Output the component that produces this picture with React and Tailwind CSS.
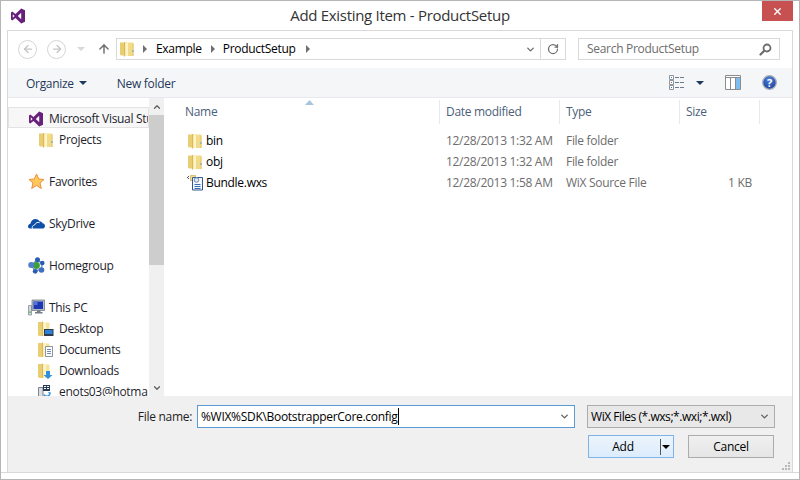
import { ChevronDown, ChevronUp, RotateCw, ArrowUp, ArrowLeft, ArrowRight, X } from "lucide-react";

function VsLogo() {
  return (
    <svg width="16" height="16" viewBox="0 0 16 16" className="shrink-0">
      <path fill="#68217a" fillRule="evenodd" d="M11.200 0.500 15 2.200v11.600l-3.800 1.700-5.700-5.600-3.300 2.500L1 11.500v-7l1.200-.9 3.300 2.500zM11.200 4.800 7.800 8l3.400 3.200zM2.800 6.200v3.600L4.600 8z" />
    </svg>
  );
}

function Folder({ id = "f" }) {
  return (
    <svg width="16" height="16" viewBox="0 0 16 16" className="shrink-0">
      <defs>
        <linearGradient id={id} x1="0" y1="0" x2="0" y2="1">
          <stop offset="0" stopColor="#f4dc88" />
          <stop offset="1" stopColor="#f0d98c" />
        </linearGradient>
      </defs>
      <path fill="#e9cd72" d="M1 1.500h4v13H2l-1-1z" />
      <path fill="#d9b95a" d="M5 1h1v14.500H5z" />
      <path fill={`url(#${id})`} d="M6 1.500h7.500a1 1 0 0 1 1 1V15H6z" />
      <path fill="#fdf4c8" d="M6.500 2h2.500v13H6.500z" />
      <path fill="#e6c566" d="M13.500 2.500h1V15h-1z" />
      <path fill="#4fa6e0" d="M13.500 9h1v2h-1z" />
    </svg>
  );
}

function FolderBack({ children }) {
  return (
    <svg width="16" height="16" viewBox="0 0 16 16" className="shrink-0">
      <path fill="#e9cd72" d="M0 1h4v14H1l-1-1z" />
      <path fill="#d9b95a" d="M4 .5h1V15H4z" />
      <path fill="#f6e3a0" d="M5 1.500h5.500a1 1 0 0 1 1 1V15H5z" />
      <path fill="#fdf4c8" d="M5.500 2H8v13H5.500z" />
      {children}
    </svg>
  );
}

function Star() {
  return (
    <svg width="17" height="17" viewBox="0 0 17 17" className="shrink-0">
      <defs>
        <linearGradient id="star" x1="0" y1="0" x2="0" y2="1">
          <stop offset="0" stopColor="#ffd24a" />
          <stop offset="1" stopColor="#fcc06a" />
        </linearGradient>
      </defs>
      <path fill="url(#star)" stroke="#ec8f3c" d="M8.500 1l2.200 5 5.300.5-4 3.500 1.300 5.500-4.800-3-4.800 3 1.300-5.500-4-3.500 5.300-.5z" />
    </svg>
  );
}

function Cloud() {
  return (
    <svg width="17" height="16" viewBox="0 0 17 16" className="shrink-0">
      <path fill="#0f4fa8" d="M0 10.500c0-1.500 1-2.600 2.400-2.800C3 5 5.100 3 7.500 3c1.900 0 3.400 1 4.100 2.500 1.300-.2 2.500.5 2.900 1.700 1.400.1 2.500 1.300 2.500 2.700 0 1.500-1.100 2.600-2.600 2.600H2c-1.200 0-2-.8-2-2z" />
      <path fill="none" stroke="#fff" strokeWidth="0.9" d="M4.500 12.800c-.9-1.800.4-3.800 2.300-3.900.4-1.400 1.700-2.500 3.300-2.500.6 0 1 .1 1.500.3" />
    </svg>
  );
}

function Homegroup() {
  return (
    <svg width="17" height="17" viewBox="0 0 17 17" className="shrink-0">
      <path stroke="#7f9bc8" strokeWidth="1.500" d="M9 3L3.500 8M9 3l5 3M3.500 8l3.500 6M14 6l-.5 6M7 14l6.500-2" />
      <circle cx="8.500" cy="8.500" r="3.400" fill="#3c9e3a" />
      <circle cx="9.500" cy="2.800" r="2.500" fill="#2b5cb4" />
      <circle cx="3.200" cy="8" r="3" fill="#4f7fca" />
      <circle cx="14.300" cy="6" r="2.300" fill="#2b5cb4" />
      <circle cx="7.200" cy="14.300" r="2.400" fill="#2b5cb4" />
      <circle cx="13.500" cy="13" r="2.800" fill="#3f6fbe" />
    </svg>
  );
}

function ThisPc() {
  return (
    <svg width="17" height="17" viewBox="0 0 17 17" className="shrink-0">
      <path fill="#d3d7da" stroke="#7a838c" strokeWidth="0.7" d="M.5 6.500h3v9.500h-3z" />
      <path fill="#4cc248" d="M1 12.500h2v1.200H1z" />
      <path fill="#b4bbc2" stroke="#69727b" strokeWidth="0.7" d="M4 1h12.500v10.500H4z" />
      <path fill="#1c37b4" d="M5.500 2.500h9.500V10H5.500z" />
      <path fill="#5574d8" d="M5.500 2.500h4V6h-4z" />
      <path fill="#747d86" d="M9 11.500h3.500v1.500h2v1.500h-7.500V13h2z" />
    </svg>
  );
}

function MailDrive() {
  return (
    <svg width="16" height="16" viewBox="0 0 16 16" className="shrink-0">
      <path fill="#d8dcdf" stroke="#7c858d" d="M.5 3.500h4.500v12.500H.5z" />
      <path fill="#263b58" d="M5 1h7v6H5z" />
      <path fill="#fff" d="M6 2h2v1H6zM9 2h2v1H9zM6 4h2v1H6zM9 4h2v1H9z" />
      <path fill="none" stroke="#2f8fdc" strokeWidth="1.500" d="M6 10.500a3 3 0 0 0 5.500 0" />
      <path fill="#2f8fdc" d="M10 8l3 .5-1 3z" />
    </svg>
  );
}

function BundleFile() {
  return (
    <svg width="17" height="16" viewBox="0 0 17 16" className="shrink-0">
      <path fill="#f2dc8e" stroke="#c7ab58" strokeWidth="0.7" d="M3.500 .5h5v5h-5z" />
      <path fill="#f4f8fc" stroke="#35588c" d="M5.500 2.500h10v12.500h-10z" />
      <path fill="none" stroke="#3a6cb4" d="M7.500 9.500h6M7.500 11.500h6M7.500 13.500h6" />
      <circle cx="9.500" cy="5" r="2.300" fill="#dbe7f5" stroke="#748aa5" />
      <path fill="#4c5666" d="M0 2h1v1H0zM1 1h1v1H1zM1 3h1v1H1z" />
    </svg>
  );
}

function SideRow({ level = 1, icon, children, selected }) {
  return (
    <div
      className={`flex h-[21px] shrink-0 items-center overflow-hidden whitespace-nowrap border pt-[2px] ${level === 2 ? "pl-[29px]" : "pl-[19px]"} ${selected ? "border-[#e3e3e3] bg-[#f7f7f7]" : "border-transparent"}`}
    >
      <span className="flex w-[21px] shrink-0">{icon}</span>
      <span>{children}</span>
    </div>
  );
}

function SideGap() {
  return <div className="h-[21px] shrink-0" />;
}

function Crumb() {
  return (
    <svg width="4" height="8" viewBox="0 0 4 8" className="shrink-0">
      <path fill="#6f6f6f" d="M0 0l4 4-4 4z" />
    </svg>
  );
}

function Header({ label, width }) {
  return (
    <div style={{ width }} className="flex h-[24px] shrink-0 items-center border-r border-[#e7e9ec] pl-[6px] text-[#4c607a]">
      {label}
    </div>
  );
}

function FileRow({ icon, name, date, type, size }) {
  return (
    <div className="flex h-[21px] items-center">
      <div className="flex w-[273px] shrink-0 items-center pl-[20px] text-black">
        <span className="flex w-[19px] shrink-0">{icon}</span>
        {name}
      </div>
      <div className="w-[120px] shrink-0 pl-[6px] text-[#6d6d6d]">{date}</div>
      <div className="w-[120px] shrink-0 pl-[6px] text-[#6d6d6d]">{type}</div>
      <div className="w-[72px] shrink-0 text-right text-[#6d6d6d]">{size}</div>
    </div>
  );
}

export default function App() {
  return (
    <div className="relative flex h-[480px] w-[800px] flex-col overflow-hidden border border-[#b5b5b5] bg-white font-['Open_Sans','Noto_Sans',sans-serif] text-[12px] tracking-[-0.3px] text-[#1e1e1e]">
      {/* title bar */}
      <div className="grid h-[29px] shrink-0 grid-cols-[1fr_auto_1fr] items-start">
        <div className="pl-[9px] pt-[7px]">
          <VsLogo />
        </div>
        <div className="pt-[3px] text-[15px] leading-[22px] text-[#333]">Add Existing Item - ProductSetup</div>
        <div className="flex justify-end pr-[6px]">
          <div className="flex h-[20px] w-[31px] items-center justify-center bg-[#c75050] text-white">
            <X size={11} strokeWidth={3} />
          </div>
        </div>
      </div>

      <div className="mx-[6px] flex min-h-0 flex-1 flex-col border-x border-t border-[#d9d9d9] bg-white">
        {/* nav bar */}
        <div className="flex h-[37px] shrink-0 items-center pb-px pl-[10px]">
          <div className="flex h-[19px] w-[19px] items-center justify-center rounded-full border border-[#d5d5d5] text-[#c4c4c4]">
            <ArrowLeft size={12} strokeWidth={2.500} />
          </div>
          <div className="ml-[10px] flex h-[19px] w-[19px] items-center justify-center rounded-full border border-[#d5d5d5] text-[#c4c4c4]">
            <ArrowRight size={12} strokeWidth={2.500} />
          </div>
          <div className="ml-[11px] h-0 w-0 border-x-[4px] border-t-[4px] border-x-transparent border-t-[#d8d8d8]" />
          <ArrowUp size={14} strokeWidth={2.500} className="ml-[12px] text-[#6d6d6d]" />
          <div className="ml-[5px] flex h-[22px] w-[450px] shrink-0 items-center border border-[#d9d9d9]">
            <span className="pl-[2px]"><Folder id="addr" /></span>
            <span className="ml-[8px]"><Crumb /></span>
            <span className="ml-[9px] text-black">Example</span>
            <span className="ml-[9px]"><Crumb /></span>
            <span className="ml-[8px] text-black">ProductSetup</span>
            <span className="ml-[10px]"><Crumb /></span>
            <span className="flex-1" />
            <ChevronDown size={11} strokeWidth={3} className="mr-[4px] text-[#6d6d6d]" />
            <div className="flex h-full w-[25px] items-center justify-center border-l border-[#d9d9d9]">
              <RotateCw size={12} strokeWidth={2.500} className="text-[#6d6d6d]" />
            </div>
          </div>
          <div className="ml-[12px] flex h-[22px] w-[202px] shrink-0 items-center justify-between border border-[#d9d9d9] pl-[8px] pr-[7px] text-[#6d6d6d]">
            Search ProductSetup
            <svg width="13" height="13" viewBox="0 0 13 13">
              <circle cx="8" cy="5" r="3.500" fill="none" stroke="#6d6d6d" strokeWidth="1.800" />
              <path stroke="#6d6d6d" strokeWidth="2.200" strokeLinecap="round" d="M5.300 7.700L1.500 11.500" />
            </svg>
          </div>
        </div>

        {/* toolbar */}
        <div className="flex h-[30px] shrink-0 items-center border-b border-[#e6e8eb] bg-[#f5f6f7] pl-[18px] pr-[15px] text-[#1e395b]">
          <span className="pt-[2px]">Organize</span>
          <span className="ml-[5px] h-0 w-0 border-x-[4px] border-t-[4px] border-x-transparent border-t-[#1e395b]" />
          <span className="ml-[30px] pt-[2px]">New folder</span>
          <span className="flex-1" />
          <svg width="16" height="15" viewBox="0 0 16 15">
            <path fill="#fff" stroke="#8a93a0" d="M.5 .5h4v4h-4zM.5 5.500h4v4h-4zM.5 10.500h4v4h-4z" />
            <path fill="#3f73b8" d="M2 2h1v1H2zM2 12h1v1H2z" />
            <path fill="#d04a3a" d="M2 7h1v1H2z" />
            <path stroke="#6e7c92" d="M6 2.500h10M6 7.500h10M6 12.500h10" strokeDasharray="4 1" />
          </svg>
          <span className="ml-[11px] h-0 w-0 border-x-[4px] border-t-[4px] border-x-transparent border-t-[#1e395b]" />
          <svg width="16" height="15" viewBox="0 0 16 15" className="ml-[21px]">
            <path fill="#fff" stroke="#8c8c8c" d="M.5 .5h15v14H.5z" />
            <path fill="#7fbcf2" d="M10 3h5v11h-5z" />
            <path stroke="#8c8c8c" d="M.5 2.500h15M5.500 2.500v12M10.500 2.500v12" />
          </svg>
          <svg width="15" height="15" viewBox="0 0 15 15" className="ml-[21px]">
            <defs>
              <radialGradient id="help" cx="0.5" cy="0.3" r="0.7">
                <stop offset="0" stopColor="#4f86dc" />
                <stop offset="1" stopColor="#1c3f9c" />
              </radialGradient>
            </defs>
            <circle cx="7.500" cy="7.500" r="6.800" fill="url(#help)" stroke="#a7adb8" strokeWidth="1.300" />
            <text x="7.500" y="11.500" textAnchor="middle" fontSize="11" fontWeight="700" fill="#fff">?</text>
          </svg>
        </div>

        {/* main */}
        <div className="flex h-[298px] shrink-0">
          <div className="flex w-[141px] shrink-0 flex-col overflow-hidden pt-[9px] text-[#1e1e2e]">
            <SideRow selected icon={<VsLogo />}>Microsoft Visual Studio</SideRow>
            <SideRow level={2} icon={<Folder id="proj" />}>Projects</SideRow>
            <SideGap />
            <SideRow icon={<Star />}>Favorites</SideRow>
            <SideGap />
            <SideRow icon={<Cloud />}>SkyDrive</SideRow>
            <SideGap />
            <SideRow icon={<Homegroup />}>Homegroup</SideRow>
            <SideGap />
            <SideRow icon={<ThisPc />}>This PC</SideRow>
            <SideRow level={2} icon={<FolderBack><path fill="#2d3b4f" d="M6 8h9.500v7H6z" /><path fill="#2f7fd4" d="M7 9h7.500v4H7z" /></FolderBack>}>Desktop</SideRow>
            <SideRow level={2} icon={<FolderBack><path fill="#fff" stroke="#8a93a0" d="M7.500 4.500h7v10h-7z" /><path stroke="#6f8cb8" d="M9 7.500h4M9 9.500h4M9 11.500h4" /></FolderBack>}>Documents</SideRow>
            <SideRow level={2} icon={<FolderBack><path fill="#2f8fdc" d="M8 8h4v4h2.500l-4.500 4-4.500-4H8z" /></FolderBack>}>Downloads</SideRow>
            <SideRow level={2} icon={<MailDrive />}>enots03@hotmail.com</SideRow>
          </div>
          {/* scrollbar */}
          <div className="flex w-[15px] shrink-0 flex-col items-center bg-[#f0f0f0] text-[#606060]">
            <div className="flex h-[17px] w-full items-center justify-center bg-[#f0f0f0]">
              <ChevronUp size={10} strokeWidth={3} />
            </div>
            <div className="h-[150px] w-full bg-[#cdcdcd]" />
            <div className="flex-1" />
            <div className="flex h-[16px] w-full items-center justify-center">
              <ChevronDown size={10} strokeWidth={3} />
            </div>
          </div>

          {/* file list */}
          <div className="relative min-w-0 flex-1 pl-[3px]">
            <svg width="9" height="5" viewBox="0 0 9 5" className="absolute left-[141px] top-[2px]">
              <path fill="#a8c4dc" d="M4.500 0L9 5H0z" />
            </svg>
            <div className="flex h-[26px] items-center pt-[2px]">
              <Header label={<span className="pl-[12px]">Name</span>} width={273} />
              <Header label="Date modified" width={120} />
              <Header label="Type" width={120} />
              <Header label="Size" width={80} />
            </div>
            <div className="mt-[6px]">
              <FileRow icon={<Folder id="bin" />} name="bin" date="12/28/2013 1:32 AM" type="File folder" />
              <FileRow icon={<Folder id="obj" />} name="obj" date="12/28/2013 1:32 AM" type="File folder" />
              <FileRow icon={<BundleFile />} name="Bundle.wxs" date="12/28/2013 1:58 AM" type="WiX Source File" size="1 KB" />
            </div>
          </div>
        </div>

        {/* bottom panel */}
        <div className="flex-1 bg-[#f0f0f0] pr-[18px]">
          <div className="mt-[9px] flex h-[23px] items-center">
            <span className="w-[189px] shrink-0 pr-[5px] text-right text-[#1e1e1e]">File name:</span>
            <div className="flex h-[23px] w-[378px] shrink-0 items-center border border-[#5b9bd5] bg-white pl-[3px] pr-[4px] text-black">
              <span className="border-r border-black pr-px leading-[17px]">%WIX%SDK\BootstrapperCore.config</span>
              <span className="flex-1" />
              <ChevronDown size={11} strokeWidth={3} className="text-[#606060]" />
            </div>
            <div className="ml-[12px] flex h-[23px] w-[188px] shrink-0 items-center justify-between border border-[#acacac] bg-[#e8e8e8] pl-[3px] pr-[4px] tracking-[-0.45px] text-black">
              WiX Files (*.wxs;*.wxi;*.wxl)
              <ChevronDown size={11} strokeWidth={3} className="text-[#606060]" />
            </div>
          </div>
          <div className="mt-[7px] flex justify-end">
            <div className="relative flex h-[23px] w-[86px] items-center justify-center border border-[#7eb4ea] bg-gradient-to-b from-[#ecf4fc] to-[#dcecfc] pr-[16px] pt-px text-black">
              Add
              <span className="absolute right-[12px] top-[3px] h-[16px] w-px bg-[#555]" />
              <span className="absolute right-[3px] top-[9px] h-0 w-0 border-x-[4px] border-t-[4px] border-x-transparent border-t-black" />
            </div>
            <div className="ml-[14px] flex h-[23px] w-[86px] items-center justify-center border border-[#acacac] bg-gradient-to-b from-[#f0f0f0] to-[#e5e5e5] pt-px text-black">
              Cancel
            </div>
          </div>
        </div>
      </div>
      <div className="h-[7px] shrink-0 border-t border-[#d9d9d9] bg-white" />
      {/* resize grip */}
      <svg width="9" height="9" viewBox="0 0 9 9" className="absolute bottom-[9px] right-[9px]">
        <path fill="#b8b8b8" d="M7 1h2v2H7zM4 4h2v2H4zM7 4h2v2H7zM1 7h2v2H1zM4 7h2v2H4zM7 7h2v2H7z" />
      </svg>
    </div>
  );
}
